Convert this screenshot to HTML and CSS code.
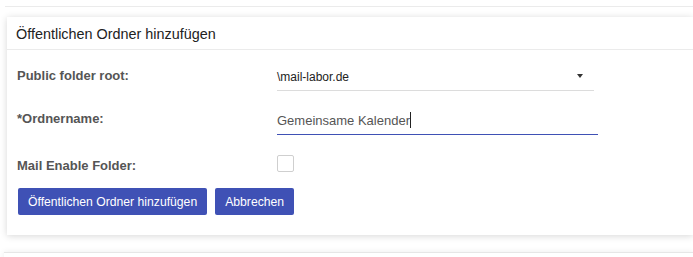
FILE: index.html
```
<!DOCTYPE html>
<html lang="de">
<head>
<meta charset="utf-8">
<title>Öffentlichen Ordner hinzufügen</title>
<link rel="stylesheet" href="styles.css">
</head>
<body>
<div class="prev"></div>
<div class="card">
  <div class="card-head">Öffentlichen Ordner hinzufügen</div>
  <div class="card-body">
    <div class="form">
      <label class="label">Public folder root:</label>
      <div class="select">
        <span class="select-value">\mail-labor.de</span>
        <span class="caret"></span>
      </div>
      <label class="label">*Ordnername:</label>
      <div class="input">Gemeinsame Kalender<span class="cursor"></span></div>
      <label class="label label-check">Mail Enable Folder:</label>
      <div class="check-wrap"><span class="checkbox"></span></div>
    </div>
    <div class="actions">
      <button class="btn">Öffentlichen Ordner hinzufügen</button>
      <button class="btn">Abbrechen</button>
    </div>
  </div>
</div>
<div class="next"></div>
</body>
</html>
```
FILE: styles.css
```
html, body {
  margin: 0;
  padding: 0;
  background: #fff;
  overflow: hidden;
  width: 693px;
  height: 257px;
  font-family: "Liberation Sans", Arial, sans-serif;
}
.prev {
  margin-left: 5px;
  height: 6px;
  border-bottom: 1px solid #ebebeb;
  width: 688px;
}
.card {
  margin-top: 10px;
  margin-left: 7px;
  width: 686px;
  background: #fff;
  box-shadow: 0 1px 7px rgba(0, 0, 0, 0.16);
}
.card-head {
  height: 33px;
  box-sizing: border-box;
  padding: 9px 0 0 9px;
  font-size: 14.4px;
  color: #222;
  border-bottom: 1px solid #ebebeb;
}
.card-body {
  padding: 0 0 20px 10px;
}
.form {
  display: grid;
  grid-template-columns: 260px 321px;
  grid-auto-rows: 43px;
  padding-top: 2px;
}
.label {
  font-weight: bold;
  font-size: 13px;
  color: #555;
  align-self: start;
  padding-top: 16px;
}
.label-check {
  padding-top: 20px;
}
.select {
  display: flex;
  align-items: center;
  justify-content: space-between;
  width: 317px;
  height: 39px;
  box-sizing: border-box;
  padding-top: 12px;
  border-bottom: 1px solid #dcdcdc;
  font-size: 12px;
  color: #222;
}
.caret {
  width: 0;
  height: 0;
  border-left: 3px solid transparent;
  border-right: 3px solid transparent;
  border-top: 4px solid #333;
  margin-right: 11px;
  margin-top: -2px;
}
.input {
  display: flex;
  align-items: center;
  width: 321px;
  height: 40px;
  box-sizing: border-box;
  padding-top: 11px;
  border-bottom: 1px solid #3f51b5;
  font-size: 13px;
  color: #555;
}
.cursor {
  display: inline-block;
  width: 1px;
  height: 16px;
  background: #222;
}
.check-wrap {
  padding-top: 17px;
}
.checkbox {
  display: block;
  width: 15px;
  height: 15px;
  border: 1px solid #cfcfcf;
  border-radius: 2px;
}
.actions {
  display: flex;
  gap: 8px;
  padding-left: 1px;
  margin-top: 7px;
}
.btn {
  height: 27px;
  padding: 0 10px;
  border: 0;
  border-radius: 2px;
  background: #3f51b5;
  color: #fff;
  font-family: "Liberation Sans", Arial, sans-serif;
  font-size: 12.2px;
}
.next {
  margin-top: 17px;
  margin-left: 4px;
  width: 689px;
  height: 10px;
  border-top: 1px solid #e6e6e6;
  box-shadow: 0 0 6px rgba(0, 0, 0, 0.08);
}
```
